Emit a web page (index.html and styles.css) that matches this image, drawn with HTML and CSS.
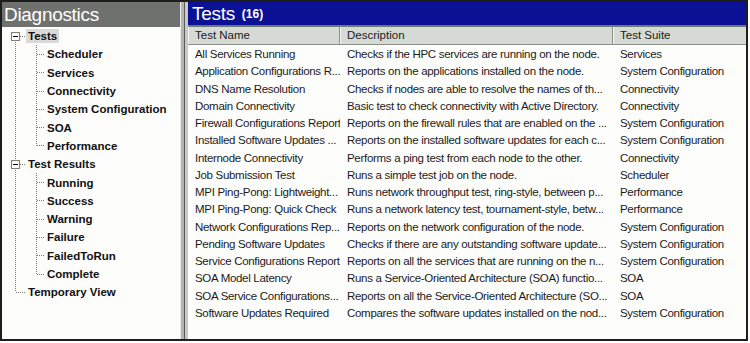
FILE: index.html
```html
<!DOCTYPE html>
<html>
<head>
<meta charset="utf-8">
<link rel="stylesheet" href="styles.css">
</head>
<body>
<div class="frame">
  <section class="left">
    <header class="pane-title gray">Diagnostics</header>
    <ul class="tree">
      <li class="branch">
        <div class="node"><span class="expander"><svg width="9" height="9" viewBox="0 0 9 9"><rect x="0.5" y="0.5" width="8" height="8" fill="#fff" stroke="#7d7d7d"/><path d="M2 4.5h5" stroke="#000" stroke-width="1"/></svg></span><span class="twig top"></span><span class="label selected">Tests</span></div>
        <ul class="kids">
          <li class="node"><span class="twig"></span><span class="label">Scheduler</span></li>
          <li class="node"><span class="twig"></span><span class="label">Services</span></li>
          <li class="node"><span class="twig"></span><span class="label">Connectivity</span></li>
          <li class="node"><span class="twig"></span><span class="label">System Configuration</span></li>
          <li class="node"><span class="twig"></span><span class="label">SOA</span></li>
          <li class="node"><span class="twig"></span><span class="label">Performance</span></li>
        </ul>
      </li>
      <li class="branch">
        <div class="node"><span class="expander"><svg width="9" height="9" viewBox="0 0 9 9"><rect x="0.5" y="0.5" width="8" height="8" fill="#fff" stroke="#7d7d7d"/><path d="M2 4.5h5" stroke="#000" stroke-width="1"/></svg></span><span class="twig top"></span><span class="label">Test Results</span></div>
        <ul class="kids">
          <li class="node"><span class="twig"></span><span class="label">Running</span></li>
          <li class="node"><span class="twig"></span><span class="label">Success</span></li>
          <li class="node"><span class="twig"></span><span class="label">Warning</span></li>
          <li class="node"><span class="twig"></span><span class="label">Failure</span></li>
          <li class="node"><span class="twig"></span><span class="label">FailedToRun</span></li>
          <li class="node"><span class="twig"></span><span class="label">Complete</span></li>
        </ul>
      </li>
      <li class="node leaf-top"><span class="twig long"></span><span class="label">Temporary View</span></li>
    </ul>
  </section>
  <div class="splitter"></div>
  <section class="right">
    <header class="pane-title blue">Tests <small>(16)</small></header>
    <div class="list">
      <div class="row head"><div>Test Name</div><div>Description</div><div>Test Suite</div></div>
      <div class="row"><div>All Services Running</div><div>Checks if the HPC services are running on the node.</div><div>Services</div></div>
      <div class="row"><div>Application Configurations R...</div><div>Reports on the applications installed on the node.</div><div>System Configuration</div></div>
      <div class="row"><div>DNS Name Resolution</div><div>Checks if nodes are able to resolve the names of th...</div><div>Connectivity</div></div>
      <div class="row"><div>Domain Connectivity</div><div>Basic test to check connectivity with Active Directory.</div><div>Connectivity</div></div>
      <div class="row"><div>Firewall Configurations Report</div><div>Reports on the firewall rules that are enabled on the ...</div><div>System Configuration</div></div>
      <div class="row"><div>Installed Software Updates ...</div><div>Reports on the installed software updates for each c...</div><div>System Configuration</div></div>
      <div class="row"><div>Internode Connectivity</div><div>Performs a ping test from each node to the other.</div><div>Connectivity</div></div>
      <div class="row"><div>Job Submission Test</div><div>Runs a simple test job on the node.</div><div>Scheduler</div></div>
      <div class="row"><div>MPI Ping-Pong: Lightweight...</div><div>Runs network throughput test, ring-style, between p...</div><div>Performance</div></div>
      <div class="row"><div>MPI Ping-Pong: Quick Check</div><div>Runs a network latency test, tournament-style, betw...</div><div>Performance</div></div>
      <div class="row"><div>Network Configurations Rep...</div><div>Reports on the network configuration of the node.</div><div>System Configuration</div></div>
      <div class="row"><div>Pending Software Updates</div><div>Checks if there are any outstanding software update...</div><div>System Configuration</div></div>
      <div class="row"><div>Service Configurations Report</div><div>Reports on all the services that are running on the n...</div><div>System Configuration</div></div>
      <div class="row"><div>SOA Model Latency</div><div>Runs a Service-Oriented Architecture (SOA) functio...</div><div>SOA</div></div>
      <div class="row"><div>SOA Service Configurations...</div><div>Reports on all the Service-Oriented Architecture (SO...</div><div>SOA</div></div>
      <div class="row"><div>Software Updates Required</div><div>Compares the software updates installed on the nod...</div><div>System Configuration</div></div>
    </div>
  </section>
</div>
</body>
</html>
```

FILE: styles.css
```css
html, body {
  margin: 0;
  padding: 0;
  background: #fff;
}

.frame {
  width: 744px;
  height: 337px;
  border: 2px solid #1d1d1d;
  display: flex;
  background: #fdfdfc;
  overflow: hidden;
}

.left {
  width: 178px;
  display: flex;
  flex-direction: column;
}

.pane-title {
  height: 25px;
  line-height: 25px;
  color: #fff;
  font-family: "Liberation Sans", Arial, sans-serif;
  font-size: 19px;
  letter-spacing: -0.3px;
  white-space: nowrap;
}

.pane-title.gray {
  background: #6f716f;
  padding-left: 2px;
}

.pane-title.blue {
  height: 23px;
  line-height: 24px;
  background: #0b1194;
  padding-left: 4px;
  border-bottom: 2px solid #6e7a72;
}

.pane-title small {
  font-size: 12px;
  font-weight: bold;
  letter-spacing: 0;
  margin-left: 2px;
  vertical-align: 2px;
}

.tree,
.kids {
  list-style: none;
  margin: 0;
  padding: 0;
}

.tree {
  padding-left: 9px;
  background-image: repeating-linear-gradient(to bottom, #7a7a7a 0 1px, transparent 1px 2px);
  background-repeat: no-repeat;
  background-size: 1px calc(100% - 18.3px);
  background-position: 13px 9.15px;
  font-family: "Liberation Sans", Arial, sans-serif;
  font-weight: bold;
  font-size: 11.5px;
  color: #111;
}

.node {
  height: 18.3px;
  display: flex;
  align-items: center;
  white-space: nowrap;
}

.expander {
  width: 9px;
  height: 9px;
  display: flex;
}

.twig {
  width: 8px;
  height: 1px;
  margin-left: 1px;
  background-image: repeating-linear-gradient(to right, #7a7a7a 0 1px, transparent 1px 2px);
}

.twig.top {
  width: 6px;
  margin-left: 0;
}

.twig.long {
  width: 10px;
  margin-left: 5px;
}

.label {
  padding: 0 2px;
  line-height: 14px;
}

.label.selected {
  background: #d9d9d7;
}

.kids {
  margin-left: 25px;
  background-image: repeating-linear-gradient(to bottom, #7a7a7a 0 1px, transparent 1px 2px);
  background-repeat: no-repeat;
  background-size: 1px calc(100% - 9.15px);
  background-position: 0 0;
}

.splitter {
  width: 8px;
  background: linear-gradient(to right, #ececea 0 1px, #b4b5b3 1px 4px, #5a5b5a 4px 5px, #c9cac8 5px 8px);
}

.right {
  flex: 1;
  display: flex;
  flex-direction: column;
  min-width: 0;
}

.list {
  flex: 1;
  font-family: "Liberation Sans", Arial, sans-serif;
  font-size: 11.5px;
  letter-spacing: -0.3px;
  color: #1b1b1b;
  background: #fdfdfc;
}

.row {
  display: grid;
  grid-template-columns: 152px 273px 1fr;
  height: 17.27px;
  line-height: 17.27px;
  white-space: nowrap;
}

.row > div {
  padding-left: 7px;
  overflow: hidden;
}

.row.head {
  height: 18px;
  line-height: 17px;
  background: #d5dad5;
  border-bottom: 1px solid #8a8f8a;
  box-sizing: border-box;
  margin-bottom: 1px;
  letter-spacing: 0;
}

.row.head > div {
  border-right: 1px solid #8c908c;
  box-shadow: inset 1px 0 0 #f4f6f4;
}

.row.head > div:last-child {
  border-right: none;
}
```
